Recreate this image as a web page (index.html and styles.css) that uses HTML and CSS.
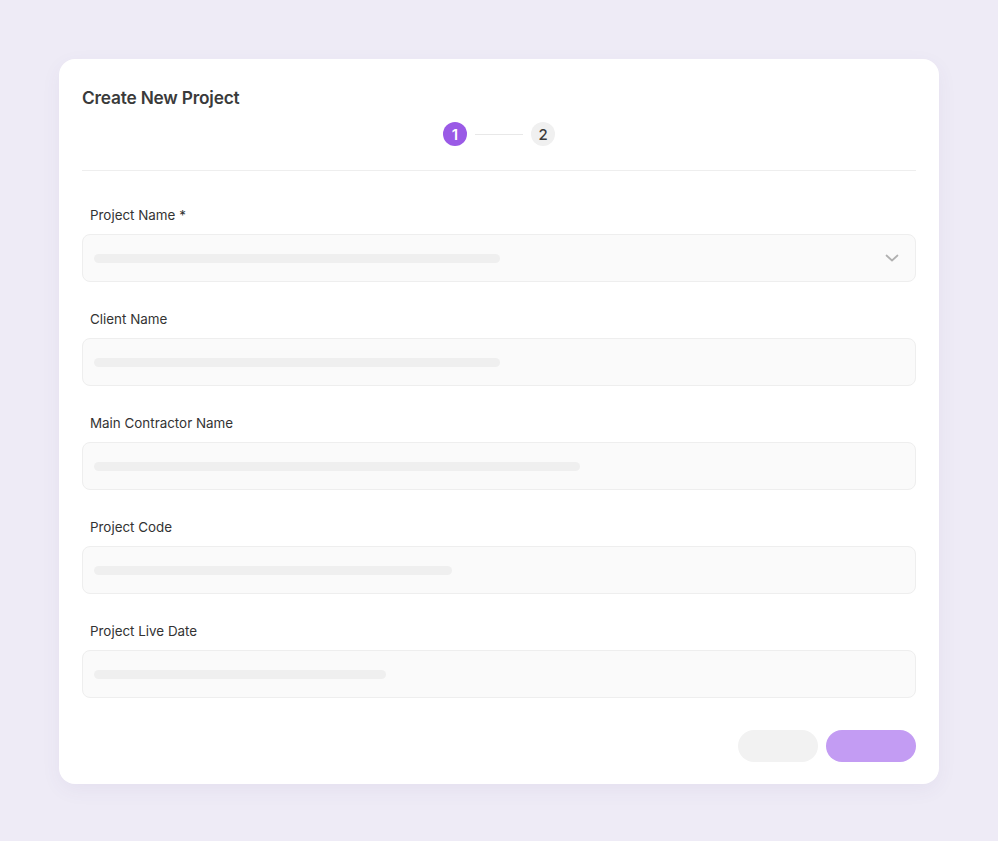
FILE: index.html
```html
<!DOCTYPE html>
<html lang="en">
<head>
    <meta charset="UTF-8">
    <meta name="viewport" content="width=device-width, initial-scale=1.0">
    <title>Create New Project</title>
    <link rel="stylesheet" href="styles.css">
</head>
<body>
    <div class="card">
        <div class="card-header">
            <h1>Create New Project</h1>
            <div class="stepper">
                <span class="step-dot active">1</span>
                <span class="step-line"></span>
                <span class="step-dot">2</span>
            </div>
        </div>

        <div class="form">
            <div class="field">
                <label>Project Name *</label>
                <div class="input select">
                    <span class="skeleton" style="width: 406px;"></span>
                    <svg class="chevron" width="16" height="16" viewBox="0 0 16 16" fill="none">
                        <path d="M2.5 5.5l5.5 5 5.5-5" stroke="#b0b0b0" stroke-width="1.7" stroke-linecap="round" stroke-linejoin="round"/>
                    </svg>
                </div>
            </div>

            <div class="field">
                <label>Client Name</label>
                <div class="input"><span class="skeleton" style="width: 406px;"></span></div>
            </div>

            <div class="field">
                <label>Main Contractor Name</label>
                <div class="input"><span class="skeleton" style="width: 486px;"></span></div>
            </div>

            <div class="field">
                <label>Project Code</label>
                <div class="input"><span class="skeleton" style="width: 358px;"></span></div>
            </div>

            <div class="field">
                <label>Project Live Date</label>
                <div class="input"><span class="skeleton" style="width: 292px;"></span></div>
            </div>
        </div>

        <div class="actions">
            <button class="btn btn-cancel"></button>
            <button class="btn btn-next"></button>
        </div>
    </div>
</body>
</html>
```

FILE: styles.css
```css
* {
    margin: 0;
    padding: 0;
    box-sizing: border-box;
    font-family: Inter, "Noto Sans", Arial, sans-serif;
}

body {
    background-color: #eeebf6;
    padding: 59px;
    min-height: 841px;
}

.card {
    width: 880px;
    background-color: #fff;
    border-radius: 16px;
    padding: 25px 23px 22px;
    box-shadow: 0 6px 20px rgba(90, 70, 140, 0.06);
}

.card-header {
    border-bottom: 1px solid #eeeeee;
    padding-bottom: 24px;
}

h1 {
    font-size: 17.3px;
    line-height: 28px;
    font-weight: 600;
    color: #3a3a3a;
    letter-spacing: -0.2px;
}

.stepper {
    display: flex;
    align-items: center;
    justify-content: center;
    margin-top: 10px;
}

.step-dot {
    width: 24px;
    height: 24px;
    border-radius: 50%;
    background-color: #f0f0f0;
    color: #3a3a3a;
    font-size: 15px;
    font-weight: 500;
    display: flex;
    align-items: center;
    justify-content: center;
}

.step-dot.active {
    background-color: #9a5ae6;
    color: #fff;
    font-weight: 600;
}

.step-line {
    width: 48px;
    height: 1px;
    background-color: #e8e8e8;
    margin: 0 8px;
}

.form {
    display: flex;
    flex-direction: column;
    gap: 27px;
    padding-top: 34px;
}

.field {
    display: flex;
    flex-direction: column;
    gap: 9px;
}

label {
    font-size: 13.4px;
    line-height: 20px;
    color: #333;
    padding-left: 8px;
}

.input {
    height: 48px;
    background-color: #fafafa;
    border: 1px solid #eeeeee;
    border-radius: 8px;
    padding: 0 11px;
    display: flex;
    align-items: center;
    justify-content: space-between;
}

.skeleton {
    display: block;
    height: 9px;
    border-radius: 5px;
    background-color: #efefef;
}

.chevron {
    margin-right: 4px;
}

.actions {
    display: flex;
    justify-content: flex-end;
    gap: 8px;
    margin-top: 32px;
}

.btn {
    height: 32px;
    border: none;
    border-radius: 16px;
    cursor: pointer;
}

.btn-cancel {
    width: 80px;
    background-color: #f2f2f2;
}

.btn-next {
    width: 90px;
    background-color: #c39cf3;
}
```
